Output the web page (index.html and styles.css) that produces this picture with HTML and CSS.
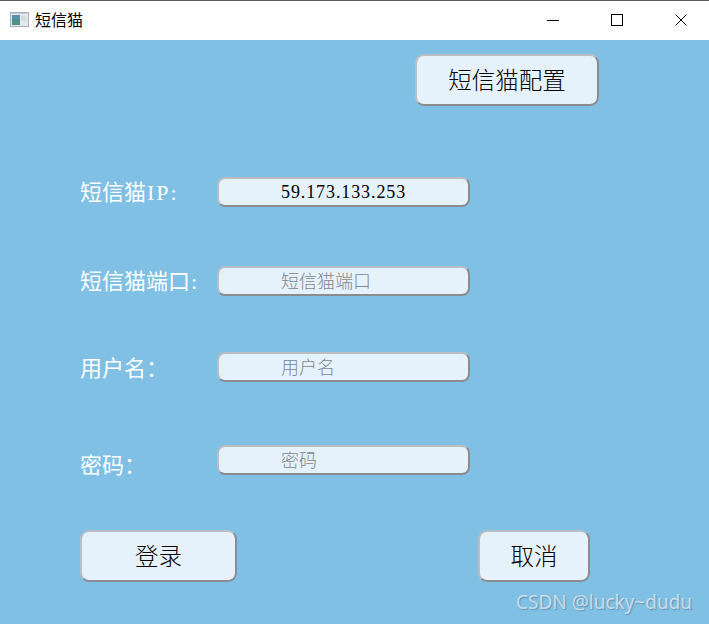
FILE: index.html
```html
<!DOCTYPE html>
<html lang="zh">
<head>
<meta charset="utf-8">
<title>短信猫</title>
<link rel="stylesheet" href="styles.css">
</head>
<body>
<div class="window">
  <header class="titlebar">
    <svg class="app-icon" width="19" height="15" viewBox="0 0 19 15">
      <rect x="0.5" y="0.5" width="18" height="14" fill="#e4e8ec" stroke="#a9afb6"/>
      <rect x="2" y="3" width="8" height="10" fill="#4f9089"/>
      <rect x="2" y="3" width="8" height="4" fill="#5f8fb0"/>
      <rect x="11" y="4" width="5" height="5" fill="#d6dadd"/>
      <rect x="2" y="1" width="15" height="1" fill="#c4ccd4"/>
    </svg>
    <span class="title">短信猫</span>
    <div class="controls">
      <svg class="ctl" width="12" height="12" viewBox="0 0 12 12"><path d="M0 6.5H12" stroke="#000" fill="none"/></svg>
      <svg class="ctl" width="12" height="12" viewBox="0 0 12 12"><rect x="0.5" y="0.5" width="11" height="11" stroke="#000" fill="none"/></svg>
      <svg class="ctl" width="12" height="12" viewBox="0 0 12 12"><path d="M0.5 0.5L11.5 11.5M11.5 0.5L0.5 11.5" stroke="#000" fill="none"/></svg>
    </div>
  </header>
  <main class="content">
    <div class="config-row"><button class="btn btn-config">短信猫配置</button></div>
    <form class="form">
      <div class="row row-ip">
        <label class="label">短信猫<span class="latin">IP:</span></label>
        <input class="field" value="59.173.133.253">
      </div>
      <div class="row row-port">
        <label class="label">短信猫端口<span class="latin">:</span></label>
        <input class="field field-ph" placeholder="短信猫端口">
      </div>
      <div class="row row-user">
        <label class="label">用户名：</label>
        <input class="field field-ph" placeholder="用户名">
      </div>
      <div class="row row-pass">
        <label class="label label-low">密码：</label>
        <input class="field field-ph" placeholder="密码">
      </div>
      <div class="actions">
        <button type="button" class="btn btn-login">登录</button>
        <button type="button" class="btn btn-cancel">取消</button>
      </div>
    </form>
    <div class="watermark">CSDN @lucky~dudu</div>
  </main>
</div>
</body>
</html>
```
FILE: styles.css
```css
* { box-sizing: border-box; }
html, body { margin: 0; padding: 0; }
body {
  width: 709px;
  height: 624px;
  overflow: hidden;
  font-family: "Noto Sans CJK SC", "Liberation Sans", sans-serif;
}
.window {
  width: 709px;
  height: 624px;
  display: flex;
  flex-direction: column;
  border-top: 1px solid #55595e;
}
.titlebar {
  height: 39px;
  background: #fff;
  display: flex;
  align-items: center;
  padding-left: 10px;
  flex: none;
}
.app-icon { flex: none; margin-top: -2px; }
.title {
  margin-left: 6px;
  padding-bottom: 3px;
  font-size: 16px;
  color: #000;
  line-height: 20px;
}
.controls {
  margin-left: auto;
  display: flex;
  gap: 52px;
  padding-right: 22px;
}
.ctl { display: block; margin-top: -1px; }
.content {
  position: relative;
  flex: 1;
  background: #7fc0e4;
  padding: 14px 0 0 80px;
}
.btn {
  display: block;
  height: 52px;
  padding: 0 0 3px;
  background: #e6f2fb;
  border: 2px solid;
  border-color: #b9bdc4 #8a8c90 #8a8c90 #b9bdc4;
  border-radius: 9px;
  font-family: inherit;
  font-size: 23.5px;
  font-weight: 300;
  color: #000;
}
.config-row { padding-left: 335px; }
.btn-config { width: 184px; }
.form { margin-top: 71px; }
.row {
  display: flex;
  align-items: center;
  height: 30px;
}
.row-port { margin-top: 59px; }
.row-user { margin-top: 56px; }
.row-pass { margin-top: 63px; }
.label {
  width: 137px;
  flex: none;
  padding-bottom: 2px;
  font-size: 22px;
  font-weight: 400;
  line-height: 30px;
  color: #fff;
  white-space: nowrap;
}
.label-low { padding: 6px 0 0; }
.latin {
  font-family: "Liberation Serif", serif;
  font-size: 22px;
  letter-spacing: 2px;
  margin-left: 1px;
}
.field {
  width: 253px;
  height: 30px;
  padding: 0 0 0 62px;
  background: #e6f2fb;
  border: 2px solid;
  border-color: #b9bdc4 #8a8c90 #8a8c90 #b9bdc4;
  border-radius: 8px;
  font-family: "Liberation Serif", "Noto Sans CJK SC", serif;
  font-size: 18px;
  letter-spacing: 0.9px;
  color: #000;
  outline: none;
}
.field-ph {
  padding-bottom: 3px;
  font-family: "Noto Sans CJK SC", sans-serif;
  letter-spacing: 0;
  font-weight: 300;
}
.field-ph::placeholder { color: #7f868d; opacity: 1; }
.actions {
  display: flex;
  margin-top: 55px;
}
.btn-login { width: 157px; }
.btn-cancel { width: 112px; margin-left: 241px; }
.watermark {
  position: absolute;
  left: 516px;
  bottom: 10px;
  font-family: "Noto Sans", sans-serif;
  font-size: 19px;
  line-height: 24px;
  color: rgba(235, 240, 245, 0.72);
  text-shadow: 1px 1px 1px rgba(70, 90, 110, 0.45);
  white-space: nowrap;
}
```
